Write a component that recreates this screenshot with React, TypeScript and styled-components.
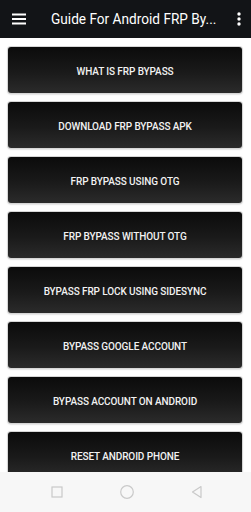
import React from 'react';
import styled, { createGlobalStyle } from 'styled-components';

const items: string[] = [
  'WHAT IS FRP BYPASS',
  'DOWNLOAD FRP BYPASS APK',
  'FRP BYPASS USING OTG',
  'FRP BYPASS WITHOUT OTG',
  'BYPASS FRP LOCK USING SIDESYNC',
  'BYPASS GOOGLE ACCOUNT',
  'BYPASS ACCOUNT ON ANDROID',
  'RESET ANDROID PHONE',
];

const GlobalStyle = createGlobalStyle`
  html, body {
    margin: 0;
    padding: 0;
    background: #ffffff;
    font-family: Roboto, 'Liberation Sans', sans-serif;
  }
`;

const Screen = styled.div`
  width: 251px;
  height: 512px;
  display: flex;
  flex-direction: column;
  overflow: hidden;
  background: #ffffff;
`;

const Toolbar = styled.div`
  height: 38px;
  flex-shrink: 0;
  background: #121417;
  display: flex;
  align-items: center;
  padding: 0 6px 0 12px;
  color: #ffffff;
  svg {
    flex-shrink: 0;
  }
`;

const Title = styled.div`
  flex: 1;
  min-width: 0;
  margin-left: 25px;
  font-size: 15.5px;
  font-weight: 400;
  white-space: nowrap;
  transform: scaleX(0.88);
  transform-origin: left center;
`;

const MenuDots = styled.div`
  width: 12px;
  flex-shrink: 0;
  margin-left: 10px;
  display: flex;
  justify-content: center;
`;

const List = styled.div`
  flex: 1;
  overflow: hidden;
  display: flex;
  flex-direction: column;
  gap: 9px;
  padding: 9px 9px 0 8px;
`;

const ItemButton = styled.div`
  height: 46px;
  flex-shrink: 0;
  border-radius: 3px;
  background: linear-gradient(#0b0b0b, #1a1a1a 55%, #2b2b2b);
  box-shadow: 0 0 0 1px #d6d6d6, 0 1px 2px rgba(0, 0, 0, 0.35);
  display: flex;
  align-items: center;
  justify-content: center;
  padding-top: 2px;
  box-sizing: border-box;
  color: #f2f2f2;
  font-size: 10px;
  font-weight: 500;
  letter-spacing: -0.1px;
`;

const NavBar = styled.div`
  height: 40px;
  flex-shrink: 0;
  background: #f7f7f7;
  display: flex;
  align-items: center;
  justify-content: space-between;
  padding: 0 47px 0 50px;
`;

const App: React.FC = () => {
  return (
    <>
      <GlobalStyle />
      <Screen>
        <Toolbar>
          <svg width="14" height="12" viewBox="0 0 14 12">
            <rect x="0" y="0.5" width="14" height="2" fill="#fff" />
            <rect x="0" y="5" width="14" height="2" fill="#fff" />
            <rect x="0" y="9.5" width="14" height="2" fill="#fff" />
          </svg>
          <Title>Guide For Android FRP By...</Title>
          <MenuDots>
            <svg width="4" height="14" viewBox="0 0 4 14">
              <circle cx="2" cy="2" r="1.7" fill="#fff" />
              <circle cx="2" cy="7" r="1.7" fill="#fff" />
              <circle cx="2" cy="12" r="1.7" fill="#fff" />
            </svg>
          </MenuDots>
        </Toolbar>
        <List>
          {items.map((label, index) => (
            <ItemButton key={index}>{label}</ItemButton>
          ))}
        </List>
        <NavBar>
          <svg width="14" height="14" viewBox="0 0 14 14">
            <rect x="2" y="2" width="10" height="10" fill="none" stroke="#c9c9c9" strokeWidth="1.2" />
          </svg>
          <svg width="16" height="16" viewBox="0 0 16 16">
            <circle cx="8" cy="8" r="6.3" fill="none" stroke="#c9c9c9" strokeWidth="1.2" />
          </svg>
          <svg width="14" height="14" viewBox="0 0 14 14">
            <path d="M11 1.5 L2.5 7 L11 12.5 Z" fill="none" stroke="#c9c9c9" strokeWidth="1.2" strokeLinejoin="round" />
          </svg>
        </NavBar>
      </Screen>
    </>
  );
};

export default App;
